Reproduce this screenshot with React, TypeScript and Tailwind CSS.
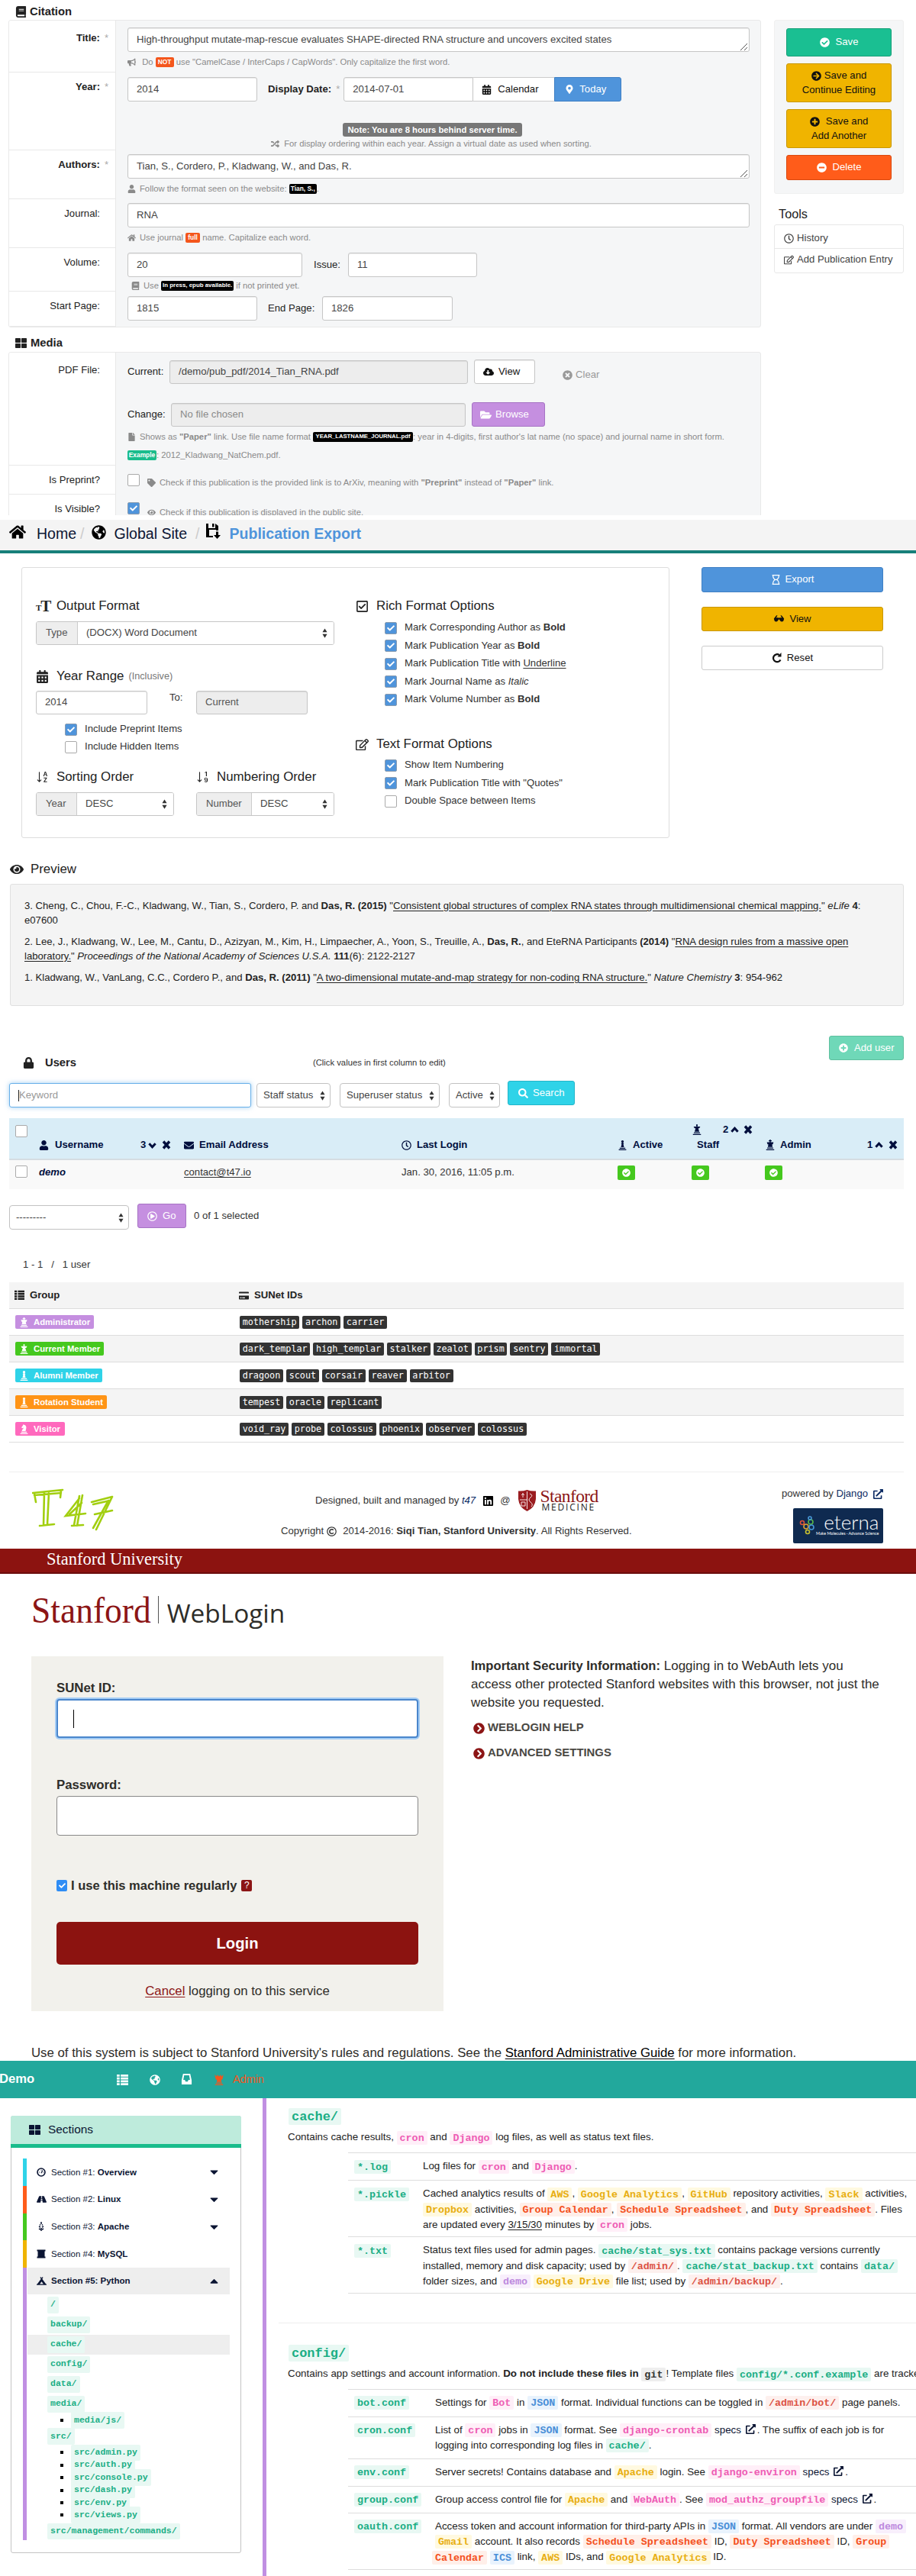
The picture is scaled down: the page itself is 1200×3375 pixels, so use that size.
import type { ReactNode } from "react";
import type { IconType } from "react-icons";
import { BsSortAlphaDown, BsSortNumericDown } from "react-icons/bs";
import {
  FaArrowCircleRight, FaBook, FaBullhorn, FaCalendarAlt, FaCampground, FaCaretDown, FaCaretUp, FaCheck, FaCheckCircle,
  FaChevronCircleRight, FaCloudDownloadAlt, FaCreditCard, FaEnvelope, FaExternalLinkAlt, FaEye, FaFile, FaFolderOpen,
  FaGlobeAmericas, FaHome, FaLinkedin, FaLock, FaMapMarkerAlt, FaMinusCircle, FaPlusCircle, FaRandom,
  FaRegCheckSquare, FaRegClock, FaRegCopyright, FaRegEdit, FaRegHourglass, FaRegPlayCircle, FaRoad, FaSearch,
  FaTag, FaThLarge, FaTimesCircle, FaUser,
} from "react-icons/fa";

type Kids = { children?: ReactNode; className?: string };
type IconProps = { className?: string };

/* ---------- small icons ---------- */

const GRAY_BASE = "M2 14.500h12V16H2zM3.500 12h9v1.500h-9z";

function King({ className = "" }: IconProps) {
  return <svg viewBox="0 0 16 16" className={`fill-current ${className}`}><path d={`${GRAY_BASE}M7.200 0h1.600v1.200h1.400v1.500H8.800V4H13l-1 3h-1.200l.7 4h-7l.7-4H4L3 4h4.200V2.700H5.800V1.200h1.400z`} /></svg>;
}
function Queen({ className = "" }: IconProps) {
  return <svg viewBox="0 0 16 16" className={`fill-current ${className}`}><path d={`${GRAY_BASE}M8 0a1.300 1.300 0 0 1 .8 2.300V3.500H13L11.500 6H10l1.500 5h-7L6 6H4.500L3 3.500h4.200V2.300A1.300 1.300 0 0 1 8 0z`} /></svg>;
}
function Rook({ className = "" }: IconProps) {
  return <svg viewBox="0 0 16 16" className={`fill-current ${className}`}><path d={`${GRAY_BASE}M1.500 0l3 3L5.500 0 8 3l2.500-3 1 3 3-3-1.500 7-2 1 .5 3h-7L5 8 3 7z`} /></svg>;
}
function Bishop({ className = "" }: IconProps) {
  return <svg viewBox="0 0 16 16" className={`fill-current ${className}`}><path d={`${GRAY_BASE}M8 0a2.100 2.100 0 0 1 1.200 3.800V5H10v1.300H9.300L10.500 11h-5l1.200-4.700H6V5h.8V3.800A2.100 2.100 0 0 1 8 0z`} /></svg>;
}
function Knight({ className = "" }: IconProps) {
  return <svg viewBox="0 0 16 16" className={`fill-current ${className}`}><path d={`${GRAY_BASE}M7 0l1 1c3 .5 4 3 3.500 5.500L10.500 11h-6c0-2.500 2.500-3.500 3-5.500L5 6.500 3.800 5.200 6 2z`} /></svg>;
}
function Cross({ className = "" }: IconProps) {
  return <svg viewBox="0 0 12 12" className={`fill-none stroke-current stroke-[3.4] ${className}`}><path d="M2 1.500 10 10.500M10 1.500 2 10.500" /></svg>;
}
function Down({ className = "" }: IconProps) {
  return <svg viewBox="0 0 12 12" className={`fill-none stroke-current stroke-[3.2] ${className}`}><path d="M1.500 3.500 6 8.500l4.500-5" /></svg>;
}
function Up({ className = "" }: IconProps) {
  return <svg viewBox="0 0 12 12" className={`fill-none stroke-current stroke-[3.2] ${className}`}><path d="M1.500 8.500 6 3.500l4.500 5" /></svg>;
}
function Floppy({ className = "" }: IconProps) {
  return <svg viewBox="0 0 20 20" className={`fill-current ${className}`}><path d="M1 0h3v6h9V0l4 3v6h-3V8H5v8h5v2H1zM9 0h2.500v4.500H9zM14 10.500h3V15h3l-4.500 5-4.500-5h3z" /></svg>;
}
function ListIcon({ className = "" }: IconProps) {
  return <svg viewBox="0 0 16 16" className={`fill-current ${className}`}><path d="M0 1h4v3H0zM5.500 1H16v3H5.500zM0 5h4v3H0zM5.500 5H16v3H5.500zM0 9h4v3H0zM5.500 9H16v3H5.500zM0 13h4v3H0zM5.500 13H16v3H5.500z" /></svg>;
}
function Tray({ className = "" }: IconProps) {
  return <svg viewBox="0 0 16 16" className={`fill-current ${className}`}><path fillRule="evenodd" d="M3 0h10l2 9v6H1V9zM4.500 2 3.300 8.500H5.500L6.500 11h3l1-2.500h2.200L11.500 2z" /></svg>;
}
function Shades({ className = "" }: IconProps) {
  return <svg viewBox="0 0 16 12" className={`fill-current ${className}`}><path d="M3.500 1 5 0l.5 1L3.500 4H7l1 .6L9 4h3.500l-2-3 .5-1 1.500 1L16 5.500 15 9q-2.500 2.500-5 0L8.500 6.500h-1L6 9q-2.500 2.500-5 0L0 5.500z" /></svg>;
}
function Repeat({ className = "" }: IconProps) {
  return <svg viewBox="0 0 14 14" className={`fill-none stroke-current stroke-[2.2] ${className}`}><path d="M11.500 9.500A5 5 0 1 1 9.800 3" /><path d="M12.500 0v5.500H7.500z" className="fill-current" stroke="none" /></svg>;
}
function TextSize({ className = "" }: IconProps) {
  return (
    <span className={`flex items-end font-['Liberation_Serif',serif] font-bold ${className}`}>
      <span className="text-[11px] leading-[12px]">T</span>
      <span className="-ml-px text-[21px] leading-[16px]">T</span>
    </span>
  );
}
function Gauge({ className = "" }: IconProps) {
  return <svg viewBox="0 0 14 14" className={`fill-none stroke-current ${className}`}><circle cx="7" cy="7" r="5.800" strokeWidth="1.900" /><path d="M7 8.500 9 4M3.800 7h1M9.500 7h1M7 3.200v1" strokeWidth="1.300" /></svg>;
}
function Grain() {
  return <svg viewBox="0 0 12 12" className="size-[12px] fill-none stroke-current stroke-[1.500]"><path d="M6 0v3M4 3.500l1 1M8 3.500l-1 1M3 6l2 1M9 6 7 7M3 9l2 1M9 9l-2 1M6 8v4" /></svg>;
}
function Scroll() {
  return <svg viewBox="0 0 12 12" className="size-[12px] fill-current"><path d="M.500.500h11v2h-1v7h1v2H.500v-2h1v-7h-1z" /></svg>;
}

/* ---------- shared pieces ---------- */

function Field({ children, muted, className = "" }: Kids & { muted?: boolean }) {
  return (
    <div className={`flex shrink-0 items-center rounded-[3px] border border-[#c6c6c6] pl-[11px] shadow-[inset_0_1px_1px_rgba(0,0,0,0.08)] ${muted ? "bg-[#ededed]" : "bg-white"} ${className}`}>
      {children}
    </div>
  );
}

function Updown() {
  return (
    <svg viewBox="0 0 8 16" className="h-[15px] w-[7px] shrink-0 fill-[#333]">
      <path d="M4 1 7.500 6.500H.500zM4 15 .500 9.500h7z" />
    </svg>
  );
}

function Grip() {
  return <svg viewBox="0 0 9 9" className="mt-[18px] mr-0.5 size-[9px] stroke-[#555]"><path d="M0 9 9 0M5 9l4-4" /></svg>;
}

function Check({ on = false, className = "" }: { on?: boolean; className?: string }) {
  return on ? (
    <span className={`flex size-4 shrink-0 items-center justify-center rounded-[2px] border border-[#8a9cb0] bg-[#4f94db] text-white ${className}`}>
      <FaCheck size={10} />
    </span>
  ) : (
    <span className={`size-4 shrink-0 rounded-[2px] border border-[#aaa] bg-white ${className}`} />
  );
}

function Tiny({ children, className = "text-[8.400px]" }: Kids) {
  return <b className={`inline-flex h-[13px] shrink-0 items-center justify-center rounded-[2px] leading-none text-white ${className}`}>{children}</b>;
}

/* ---------- publication form ---------- */

function FormRow({ label, star, bold, first, className = "", children }: Kids & { label: string; star?: boolean; bold?: boolean; first?: boolean }) {
  return (
    <div className={`flex shrink-0 ${className}`}>
      <div className={`relative w-[140px] shrink-0 border-r border-b border-[#e8e8e8] bg-white pr-5 text-right leading-5 ${first ? "pt-[13px]" : "pt-[9px]"} ${bold ? "font-bold" : ""}`}>
        {label}
        {star && <span className="absolute right-[9px] font-normal text-[#aaa]">*</span>}
      </div>
      <div className="flex-1 pl-[15px]">{children}</div>
    </div>
  );
}

function Help({ icon: Icon, className = "", children }: Kids & { icon: IconType }) {
  return (
    <div className={`flex items-center whitespace-pre text-[11.26px] leading-4 text-[#8a8a8a] ${className}`}>
      <Icon className="mr-[5px] size-[11px] shrink-0" />
      {children}
    </div>
  );
}

function PublicationForm() {
  return (
    <section className="h-[681px] text-[13.13px] text-[#222]">
      <div className="flex h-[675px] overflow-hidden pl-[11px]">
        <div className="w-[986px]">
          <h2 className="flex h-[26px] items-center pt-[5px] pl-[9px] text-[14.78px] font-bold">
            <FaBook className="mr-1 size-[15px]" />Citation
          </h2>
          <div className="overflow-hidden rounded-[3px] border border-[#e9e9e9] bg-[#f5f6f7]">
            <FormRow label="Title:" star bold first className="h-[68px]">
              <Field className="mt-[9px] h-8 w-[815px] justify-between text-[#444]">
                High-throughput mutate-map-rescue evaluates SHAPE-directed RNA structure and uncovers excited states
                <Grip />
              </Field>
              <Help icon={FaBullhorn} className="mt-[5px]">
                {" Do "}<Tiny className="w-6 bg-[#f4561c] text-[8.400px]">NOT</Tiny>{" use \"CamelCase / InterCaps / CapWords\". Only capitalize the first word."}
              </Help>
            </FormRow>
            <FormRow label="Year:" star bold className="h-[102px]">
              <div className="flex items-center pt-[6px]">
                <Field className="h-8 w-[170px] text-[#444]">2014</Field>
                <b className="ml-[14px]">Display Date:</b>
                <span className="mr-[5px] ml-[6px] text-[#aaa]">*</span>
                <Field className="h-8 w-[170px] rounded-r-none text-[#444]">2014-07-01</Field>
                <div className="flex h-8 w-[106px] items-center border-y border-[#ccc] bg-white pl-[11px] text-[#111]"><FaCalendarAlt className="mr-2 size-[13px]" />Calendar</div>
                <div className="flex h-8 w-[88px] items-center rounded-r-[3px] border border-[#3e7fc4] bg-[#4f94db] pl-[13px] text-white"><FaMapMarkerAlt className="mr-[7px] size-[12px]" />Today</div>
              </div>
              <div className="mt-7 ml-[282px] flex h-[18px] w-[235px] items-center justify-center rounded-[3px] bg-[#777] text-[11.26px] font-bold text-white">Note: You are 8 hours behind server time.</div>
              <Help icon={FaRandom} className="mt-px ml-[188px]"><span className="-ml-0.5">{" For display ordering within each year. Assign a virtual date as used when sorting."}</span></Help>
            </FormRow>
            <FormRow label="Authors:" star bold className="h-[64px]">
              <Field className="mt-[5px] h-8 w-[815px] justify-between text-[#444]">
                Tian, S., Cordero, P., Kladwang, W., and Das, R.
                <Grip />
              </Field>
              <Help icon={FaUser} className="mt-[5px]">{"Follow the format seen on the website: "}<Tiny className="w-9 bg-black text-[8.400px]">Tian, S.,</Tiny>.</Help>
            </FormRow>
            <FormRow label="Journal:" className="h-[64px]">
              <Field className="mt-[5px] h-8 w-[815px] text-[#444]">RNA</Field>
              <Help icon={FaHome} className="mt-[5px]">{"Use journal "}<Tiny className="w-[19px] bg-[#f4561c] text-[8.400px]">full</Tiny>{" name. Capitalize each word."}</Help>
            </FormRow>
            <FormRow label="Volume:" className="h-[57px]">
              <div className="flex items-center pt-[6px]">
                <Field className="h-8 w-[229px] text-[#444]">20</Field>
                <span className="ml-[15px] w-[45px]">Issue:</span>
                <Field className="h-8 w-[169px] text-[#444]">11</Field>
              </div>
              <Help icon={FaBook} className="mt-[3px] ml-[5px]">{"Use "}<Tiny className="w-[95px] bg-black text-[7.900px]">In press, epub available.</Tiny>{" if not printed yet."}</Help>
            </FormRow>
            <FormRow label="Start Page:" className="h-[46px]">
              <div className="flex items-center pt-[6px]">
                <Field className="h-8 w-[170px] text-[#444]">1815</Field>
                <span className="ml-[14px] w-[71px]">End Page:</span>
                <Field className="h-8 w-[171px] text-[#444]">1826</Field>
              </div>
            </FormRow>
          </div>
          <h2 className="flex h-8 items-center pt-2 pl-[9px] text-[14.78px] font-bold">
            <FaThLarge className="mr-[5px] size-[15px]" />Media
          </h2>
          <div className="overflow-hidden rounded-t-[3px] border border-[#e9e9e9] bg-[#f5f6f7]">
            <FormRow label="PDF File:" first className="h-[148px]">
              <div className="flex pt-[9px]">
                <span className="w-[55px] pt-[6px] leading-5">Current:</span>
                <Field muted className="mt-px h-[31px] w-[391px] text-[#444]">/demo/pub_pdf/2014_Tian_RNA.pdf</Field>
                <Field className="ml-2 h-8 w-20 text-[#111]"><FaCloudDownloadAlt className="mr-[6px] size-[14px]" />View</Field>
                <span className="ml-9 flex items-center pt-2 text-[#999]"><FaTimesCircle className="mr-1 size-[13px]" />Clear</span>
              </div>
              <div className="mt-[24px] flex">
                <span className="w-[57px] pt-[6px] leading-5">Change:</span>
                <Field muted className="mt-px h-[31px] w-[386px] text-[#8a8a8a]">No file chosen</Field>
                <div className="ml-2 flex h-8 w-24 items-center rounded-[3px] border border-[#a673c4] bg-[#c58fe0] pl-[10px] text-white"><FaFolderOpen className="mr-[5px] size-[15px]" />Browse</div>
              </div>
              <Help icon={FaFile} className="mt-[5px]">
                {"Shows as "}<b>"Paper"</b>{" link. Use file name format "}<Tiny className="w-[131px] bg-black text-[7.700px]">YEAR_LASTNAME_JOURNAL.pdf</Tiny>{": year in 4-digits, first author's lat name (no space) and journal name in short form."}
              </Help>
              <div className="mt-2 flex items-center text-[11.26px] leading-4 whitespace-pre text-[#8a8a8a]">
                <Tiny className="w-[38px] bg-[#1abc8c] text-[8.400px]">Example</Tiny>{": 2012_Kladwang_NatChem.pdf."}
              </div>
            </FormRow>
            <FormRow label="Is Preprint?" className="h-[38px]">
              <div className="flex pt-[11px]">
                <Check className="mr-[10px]" />
                <Help icon={FaTag} className="pt-[3px]">{"Check if this publication is the provided link is to ArXiv, meaning with "}<b>"Preprint"</b>{" instead of "}<b>"Paper"</b>{" link."}</Help>
              </div>
            </FormRow>
            <FormRow label="Is Visible?" className="h-[38px]">
              <div className="flex pt-[10px]">
                <Check on className="mr-[10px]" />
                <Help icon={FaEye} className="pt-[5px]">Check if this publication is displayed in the public site.</Help>
              </div>
            </FormRow>
          </div>
        </div>
        <aside className="ml-[17px] w-[170px] pt-[26px]">
          <div className="flex h-[228px] flex-col gap-[9px] rounded-[3px] border border-[#f0f0f0] bg-[#f5f6f7] px-[15px] pt-[10px] leading-[18.700px]">
            <div className="flex h-[37px] items-center justify-center rounded-[3px] border border-[#17a078] bg-[#1abf92] text-white"><FaCheckCircle className="mr-2 size-[13px]" />Save</div>
            <div className="flex h-[51px] flex-col items-center justify-center rounded-[3px] border border-[#c99700] bg-[#f0b400] text-[#111]"><span className="flex items-center"><FaArrowCircleRight className="mr-1 size-[13px]" />Save and</span>Continue Editing</div>
            <div className="flex h-[51px] flex-col items-center justify-center rounded-[3px] border border-[#c99700] bg-[#f0b400] text-[#111]"><span className="flex items-center"><FaPlusCircle className="mr-2 size-[13px]" />Save and</span>Add Another</div>
            <div className="flex h-[33px] items-center justify-center rounded-[3px] border border-[#d9490f] bg-[#ff5c1a] text-white"><FaMinusCircle className="mr-2 size-[13px]" />Delete</div>
          </div>
          <div className="mt-4 pl-[6px] text-[16.3px] leading-5">Tools</div>
          <div className="mt-1 rounded-[3px] border border-[#e8e8e8] text-[#444]">
            <div className="flex h-[31px] items-center border-b border-[#e8e8e8] pt-1 pl-3"><FaRegClock className="mr-1 size-[13px]" />History</div>
            <div className="flex h-[31px] items-center pb-0.5 pl-3 whitespace-nowrap"><FaRegEdit className="mr-1 size-[13px] shrink-0" />Add Publication Entry</div>
          </div>
        </aside>
      </div>
    </section>
  );
}

/* ---------- export page ---------- */

function Heading({ icon, children, className = "" }: Kids & { icon: ReactNode }) {
  return (
    <h3 className={`flex h-6 items-center text-[16.88px] text-[#222] ${className}`}>
      <span className="w-[27px] shrink-0">{icon}</span>
      {children}
    </h3>
  );
}

function Group({ addon, value, className = "", addonClass }: { addon: string; value: string; className?: string; addonClass: string }) {
  return (
    <div className={`flex h-[31px] overflow-hidden rounded-[3px] border border-[#c6c6c6] text-[#555] ${className}`}>
      <span className={`flex items-center border-r border-[#ccc] bg-[#eee] pl-3 ${addonClass}`}>{addon}</span>
      <span className="flex flex-1 items-center justify-between bg-white pr-2 pl-[11px] text-[#444]">{value}<Updown /></span>
    </div>
  );
}

function Option({ on, children, className = "" }: Kids & { on?: boolean }) {
  return <div className={`flex items-center whitespace-pre text-[#333] ${className}`}><Check on={on} className="mr-[10px]" />{children}</div>;
}

function ExportPage() {
  return (
    <section className="h-[637px] text-[13.13px]">
      <div className="flex h-[44px] items-center border-b-4 border-[#17807a] bg-[#f4f4f4] pb-1 text-[19.55px] text-[#0b1533]">
        <FaHome className="mb-1 ml-[12px] size-[22px] text-black" /><span className="ml-[14px]">Home</span>
        <span className="ml-[5px] text-[#ccc]">/</span>
        <FaGlobeAmericas className="mb-1 ml-[9px] size-[19px] text-black" /><span className="ml-[11px]">Global Site</span>
        <span className="ml-[11px] text-[#ccc]">/</span>
        <Floppy className="mb-1.5 ml-[7px] size-[20px] text-black" /><b className="ml-[12px] text-[#4f94db]">Publication Export</b>
      </div>
      <div className="flex pt-[18px] pl-[28px]">
        <div className="flex h-[355px] w-[849px] rounded-[3px] border border-[#ddd] pt-[38px] pl-[18px]">
          <div className="w-[391px]">
            <Heading icon={<TextSize />}>Output Format</Heading>
            <Group addon="Type" value="(DOCX) Word Document" addonClass="w-[54px]" className="mt-2" />
            <Heading icon={<FaCalendarAlt className="size-[17px]" />} className="mt-[29px]">Year Range <span className="ml-[6px] text-[12.700px] text-[#777]">(Inclusive)</span></Heading>
            <div className="mt-[7px] flex">
              <Field className="h-[31px] w-[146px] text-[#444]">2014</Field>
              <span className="ml-[29px] w-[35px] text-[#333]">To:</span>
              <Field muted className="h-[31px] w-[146px] text-[#555]">Current</Field>
            </div>
            <div className="mt-2 pl-[38px]">
              <Option on className="h-[23px]">Include Preprint Items</Option>
              <Option className="h-[23px]">Include Hidden Items</Option>
            </div>
            <div className="mt-4 flex justify-between">
              <div className="w-[181px]">
                <Heading icon={<BsSortAlphaDown className="size-[18px]" />}>Sorting Order</Heading>
                <Group addon="Year" value="DESC" addonClass="w-[53px]" className="mt-2" />
              </div>
              <div className="w-[181px]">
                <Heading icon={<BsSortNumericDown className="size-[18px]" />}>Numbering Order</Heading>
                <Group addon="Number" value="DESC" addonClass="w-[72px]" className="mt-2" />
              </div>
            </div>
          </div>
          <div className="ml-[28px]">
            <Heading icon={<FaRegCheckSquare className="size-[17px]" />}>Rich Format Options</Heading>
            <div className="mt-[5px] pl-[38px]">
              <Option on className="h-[23.500px]">{"Mark Corresponding Author as "}<b>Bold</b></Option>
              <Option on className="h-[23.500px]">{"Mark Publication Year as "}<b>Bold</b></Option>
              <Option on className="h-[23.500px]">{"Mark Publication Title with "}<u className="underline-offset-2">Underline</u></Option>
              <Option on className="h-[23.500px]">{"Mark Journal Name as "}<i>Italic</i></Option>
              <Option on className="h-[23.500px]">{"Mark Volume Number as "}<b>Bold</b></Option>
            </div>
            <Heading icon={<FaRegEdit className="size-[17px]" />} className="mt-[34.500px]">Text Format Options</Heading>
            <div className="mt-1 pl-[38px]">
              <Option on className="h-[23.500px]">Show Item Numbering</Option>
              <Option on className="h-[23.500px]">Mark Publication Title with "Quotes"</Option>
              <Option className="h-[23.500px]">Double Space between Items</Option>
            </div>
          </div>
        </div>
        <div className="ml-[42px] flex w-[238px] flex-col gap-[19px]">
          <div className="flex h-[33px] items-center justify-center rounded-[3px] border border-[#3e7fc4] bg-[#4f94db] text-white"><FaRegHourglass className="mr-[6px] size-[13px]" />Export</div>
          <div className="flex h-8 items-center justify-center rounded-[3px] border border-[#c99700] bg-[#f0b400] text-[#111]"><Shades className="mr-[6px] h-[10px] w-[15px]" />View</div>
          <div className="flex h-8 items-center justify-center rounded-[3px] border border-[#ccc] bg-white text-[#111]"><Repeat className="mr-[6px] size-[14px]" />Reset</div>
        </div>
      </div>
      <Heading icon={<FaEye className="size-[18px]" />} className="mt-[29px] ml-[13px]">Preview</Heading>
      <div className="mt-[7px] ml-[13px] h-40 w-[1171px] rounded-[3px] border border-[#e0e0e0] bg-[#f4f4f4] pt-[19px] pl-[18px] leading-[18.76px] whitespace-nowrap text-[#222]">
        <p>3. Cheng, C., Chou, F.-C., Kladwang, W., Tian, S., Cordero, P. and <b>Das, R. (2015)</b> "<u className="underline-offset-2">Consistent global structures of complex RNA states through multidimensional chemical mapping.</u>" <i>eLife</i> <b>4</b>:<br />e07600</p>
        <p className="mt-[9.400px]">2. Lee, J., Kladwang, W., Lee, M., Cantu, D., Azizyan, M., Kim, H., Limpaecher, A., Yoon, S., Treuille, A., <b>Das, R.</b>, and EteRNA Participants <b>(2014)</b> "<u className="underline-offset-2">RNA design rules from a massive open</u><br /><u className="underline-offset-2">laboratory.</u>" <i>Proceedings of the National Academy of Sciences U.S.A.</i> <b>111</b>(6): 2122-2127</p>
        <p className="mt-[9.400px]">1. Kladwang, W., VanLang, C.C., Cordero P., and <b>Das, R. (2011)</b> "<u className="underline-offset-2">A two-dimensional mutate-and-map strategy for non-coding RNA structure.</u>" <i>Nature Chemistry</i> <b>3</b>: 954-962</p>
      </div>
    </section>
  );
}

/* ---------- users page ---------- */

function Select({ children, className = "" }: Kids) {
  return <div className={`flex h-8 shrink-0 items-center justify-between rounded-[4px] border border-[#c2c2c2] bg-white pr-[6px] pl-2 text-[#444] ${className}`}>{children}<Updown /></div>;
}

function Ok() {
  return <span className="flex h-[19px] w-[23px] items-center justify-center rounded-[2px] bg-[#45c81e] text-white"><FaCheckCircle size={11} /></span>;
}

const groups: { name: string; icon: (p: IconProps) => ReactNode; tag: string; ids: string[] }[] = [
  { name: "Administrator", icon: King, tag: "w-[103px] bg-[#c58fe0]", ids: ["mothership", "archon", "carrier"] },
  { name: "Current Member", icon: Queen, tag: "w-[116px] bg-[#45c81e]", ids: ["dark_templar", "high_templar", "stalker", "zealot", "prism", "sentry", "immortal"] },
  { name: "Alumni Member", icon: Bishop, tag: "w-[114px] bg-[#2fd3e8]", ids: ["dragoon", "scout", "corsair", "reaver", "arbitor"] },
  { name: "Rotation Student", icon: Bishop, tag: "w-[120px] bg-[#ff9416]", ids: ["tempest", "oracle", "replicant"] },
  { name: "Visitor", icon: Knight, tag: "w-[65px] bg-[#ff69bd]", ids: ["void_ray", "probe", "colossus", "phoenix", "observer", "colossus"] },
];

function UsersPage() {
  return (
    <section className="h-[711px] pt-[39px] pr-4 pl-3 text-[13.13px] text-[#333]">
      <div className="flex h-[59px]">
        <div className="flex w-[398px] items-center pt-[11px] pl-[18px] text-[14.75px] font-bold text-[#222]"><FaLock className="mr-[14px] size-[15px]" />Users</div>
        <div className="flex w-[676px] items-center pt-[11px] text-[11.26px]">(Click values in first column to edit)</div>
        <div className="flex h-8 w-[98px] shrink-0 items-center rounded-[3px] border border-[#5fbf9f] bg-[#6fd8b8] pl-3 whitespace-nowrap text-white"><FaPlusCircle className="mr-2 size-[12px]" />Add user</div>
      </div>
      <div className="flex h-[49px]">
        <div className="mt-[3px] flex h-8 w-[317px] items-center rounded-[3px] border border-[#66afe9] bg-white pl-[11px] text-[#999] shadow-[0_0_6px_rgba(102,175,233,0.6)]"><span className="h-[15px] w-px bg-[#222]" />Keyword</div>
        <Select className="mt-[3px] ml-[7px] w-[97px]">Staff status</Select>
        <Select className="mt-[3px] ml-[12px] w-[131px]">Superuser status</Select>
        <Select className="mt-[3px] ml-[12px] w-[67px]">Active</Select>
        <div className="ml-[10px] flex h-8 w-[88px] items-center rounded-[3px] border border-[#22b5c9] bg-[#2fd3e8] pl-[13px] text-white"><FaSearch className="mr-[6px] size-[13px]" />Search</div>
      </div>
      <div className="flex h-[55px] border-b-2 border-[#d5dde2] bg-[#d9edf7] leading-5 font-bold text-[#000e3d]">
        <div className="w-[39px] pt-[9px] pl-2"><Check className="block" /></div>
        <div className="flex w-[190px] items-center pt-[17px]"><FaUser className="mr-2 size-[13px]" /><span className="w-[112px]">Username</span>3<Down className="mx-[3px] size-[11px]" /><Cross className="ml-1 size-[12px]" /></div>
        <div className="flex w-[285px] items-center pt-[17px]"><FaEnvelope className="mr-[7px] size-[13px]" />Email Address</div>
        <div className="flex w-[283px] items-center pt-[17px]"><FaRegClock className="mr-[7px] size-[13px]" />Last Login</div>
        <div className="flex w-[97px] items-center pt-[17px]"><Bishop className="mr-[7px] size-[13px]" />Active</div>
        <div className="w-[96px] pt-[5px]">
          <div className="flex items-center"><Queen className="mr-[27px] size-[14px]" />2<Up className="mx-[3px] size-[11px]" /><Cross className="ml-[3px] size-[12px]" /></div>
          <div className="pl-[7px] leading-[19px]">Staff</div>
        </div>
        <div className="flex w-[178px] items-center pt-[17px]"><King className="mr-[6px] size-[14px]" /><span className="w-[114px]">Admin</span>1<Up className="mx-[3px] size-[11px]" /><Cross className="ml-1 size-[12px]" /></div>
      </div>
      <div className="flex h-[38px] items-start bg-[#f9f9f9] pt-[7px]">
        <div className="w-[39px] pl-2"><Check className="block" /></div>
        <b className="w-[190px] text-[#000e3d] italic">demo</b>
        <div className="w-[285px]"><u className="underline-offset-2">contact@t47.io</u></div>
        <div className="w-[283px]">Jan. 30, 2016, 11:05 p.m.</div>
        <div className="w-[97px]"><Ok /></div>
        <div className="w-[96px]"><Ok /></div>
        <Ok />
      </div>
      <div className="mt-[19px] flex h-[33px]">
        <Select className="mt-[2px] w-[157px]">---------</Select>
        <div className="ml-[11px] flex h-8 w-16 items-center rounded-[3px] border border-[#a673c4] bg-[#c58fe0] pl-3 text-white"><FaRegPlayCircle className="mr-[7px] size-[13px]" />Go</div>
        <span className="ml-[10px] leading-[32px]">0 of 1 selected</span>
      </div>
      <div className="mt-[37px] pl-[18px] leading-5 whitespace-pre">{"1 - 1   /   1 user"}</div>
      <div className="mt-[13px] flex h-[35px] items-center border-b border-[#ddd] bg-[#f4f4f4] pl-[7px] font-bold text-[#222]">
        <span className="flex w-[294px] items-center"><ListIcon className="mr-[7px] size-[13px]" />Group</span>
        <FaCreditCard className="mr-[7px] size-[13px]" />SUNet IDs
      </div>
      {groups.map((g, i) => (
        <div key={g.name} className={`flex h-[35px] items-center border-b border-[#ddd] pl-2 ${i % 2 ? "bg-[#f4f4f4]" : "bg-white"}`}>
          <div className="w-[294px]"><b className={`flex h-[18px] items-center rounded-[2px] pl-[5px] text-[11.3px] whitespace-nowrap text-white ${g.tag}`}><g.icon className="mr-[6px] size-[13px]" />{g.name}</b></div>
          <div className="flex gap-1">
            {g.ids.map((id, k) => (
              <span key={k} className="h-[17px] rounded-[2px] bg-[#333] px-[3.700px] font-['DejaVu_Sans_Mono',monospace] text-[11.77px] leading-[16px] text-white">{id}</span>
            ))}
          </div>
        </div>
      ))}
      <div className="mt-[38px] flex h-[101px] border-t border-[#eee]">
        <svg viewBox="0 0 107 56" className="mt-[21px] ml-[30px] h-14 w-[107px] shrink-0 fill-none stroke-[#a2cf10] stroke-[2.6]" strokeLinecap="round">
          <path d="M1 6 40 2M3 9 38 6M3 7l2 11M38 3l-1 9M16 6l-1 42M22 6l-2 41M10 49l19-2M62 13 44 36l26-3M65 19 49 34M66 9l-7 40M62 10l-7 38M52 49l15-1M78 18l27-7M80 21l22-5M105 11 84 54M100 16 80 52M82 34l23-5" />
        </svg>
        <div className="ml-[219px] w-[470px] shrink-0 pt-[18px]">
          <div className="flex h-[38px] items-center pl-[45px] whitespace-pre">
            {"Designed, built and managed by "}<i className="text-[#0b2a63]">t47</i>
            <FaLinkedin className="mr-2 ml-[9px] size-[15px] text-black" />@
            <svg viewBox="0 0 23 28" className="ml-[11px] h-7 w-[23px]">
              <path d="M0 1.500Q6 2 11.500 0 17 2 23 1.500V12Q22 23 11.500 28 1 23 0 12Z" fill="#9a1c20" />
              <path d="M11.500 2v23M2 13h9M6 4v6m-2-3 2-2 2 2M4 16h5v5H4zM15 5q5 2 1 5t0 6 1 6" fill="none" stroke="#f4e4e4" strokeWidth="1" />
            </svg>
            <div className="ml-[5px] flex flex-col">
              <span className="-mb-0.5 font-['Liberation_Serif',serif] text-[23.5px] leading-[20px] tracking-tight text-[#8c1515]">Stanford</span>
              <span className="pl-0.5 font-['Open_Sans',sans-serif] text-[12px] leading-[14px] tracking-[1.800px] text-[#222]">MEDICINE</span>
            </div>
          </div>
          <div className="mt-[11px] flex items-center leading-5 whitespace-pre">
            Copyright<FaRegCopyright className="mr-2 ml-1 size-[13px]" />2014-2016: <b>Siqi Tian, Stanford University</b>. All Rights Reserved.
          </div>
        </div>
        <div className="ml-[184px] flex w-[135px] shrink-0 flex-col items-end pt-[18px]">
          <div className="flex items-center leading-5 whitespace-pre">powered by <span className="text-[#0b2a63]">Django</span><FaExternalLinkAlt className="ml-[7px] size-[13px] text-[#0b2a63]" /></div>
          <div className="mt-[9px] flex h-[46px] w-[118px] items-center rounded-[2px] bg-[#0f2a50] pl-2 text-white">
            <svg viewBox="0 0 22 26" className="h-[26px] w-[22px] shrink-0 fill-none stroke-[1.6]">
              <circle cx="4" cy="9" r="2.500" stroke="#e05038" /><circle cx="9" cy="14" r="3" stroke="#e0a030" /><circle cx="15" cy="8" r="3" stroke="#58b848" /><circle cx="16" cy="15" r="3" stroke="#4898d8" /><circle cx="11" cy="21" r="2.500" stroke="#c8c030" /><circle cx="14" cy="3" r="2" stroke="#4898d8" />
            </svg>
            <div className="flex flex-col items-end">
              <span className="-mt-1 font-['Lato',sans-serif] text-[26px] leading-[24px] font-light">eterna</span>
              <span className="font-['Lato',sans-serif] text-[5.400px] leading-[7px] whitespace-nowrap">Make Molecules · Advance Science</span>
            </div>
          </div>
        </div>
      </div>
    </section>
  );
}

/* ---------- login page ---------- */

function LoginPage() {
  return (
    <section className="h-[671px] text-[16.800px] text-[#2e2d29]">
      <div className="h-[33px] border-b-2 border-[#6b0d0d] bg-[#8c1310] pl-[61px] font-['Liberation_Serif',serif] text-[22.5px] leading-[27px] text-white">Stanford University</div>
      <div className="flex h-[108px] pt-[26px] pl-[41px]">
        <span className="h-[38px] origin-bottom scale-y-[1.07] font-['Liberation_Serif',serif] text-[45.5px] leading-[46px] text-[#8c1515]">Stanford</span>
        <span className="mt-[3px] ml-[9px] h-9 w-px bg-[#555]" />
        <span className="ml-[11px] font-['Open_Sans',sans-serif] text-[33.4px] leading-[51px]">WebLogin</span>
      </div>
      <div className="flex pl-[41px]">
        <div className="h-[465px] w-[540px] bg-[#f2f1ec] px-[33px] pt-[30px]">
          <b className="block leading-6">SUNet ID:</b>
          <div className="mt-0.5 flex h-[51px] items-center rounded-[4px] border-2 border-[#4a86cc] bg-white pl-5 shadow-[0_0_0_2px_#a5cdf5]"><span className="h-6 w-px bg-black" /></div>
          <b className="mt-[50px] block leading-6">Password:</b>
          <div className="mt-[2px] h-[52px] rounded-[4px] border border-[#888] bg-white" />
          <div className="mt-[53px] flex h-6 items-center">
            <span className="flex h-[15px] w-[14px] items-center justify-center rounded-[2px] bg-[#2f8df5] text-white"><FaCheck size={9} /></span>
            <b className="ml-[5px] text-[16.5px]">I use this machine regularly</b>
            <span className="ml-[6px] flex h-[15px] w-[14px] items-center justify-center rounded-[2px] bg-[#8c1515] text-[12px] text-white">?</span>
          </div>
          <div className="mt-[36px] flex h-[56px] items-center justify-center rounded-[5px] bg-[#8c1310] text-[20.200px] font-bold text-white">Login</div>
          <div className="mt-[23px] text-center leading-6"><u className="text-[#8c1515] underline-offset-2">Cancel</u> logging on to this service</div>
        </div>
        <div className="ml-[36px] text-[17px] leading-[23.800px] whitespace-nowrap">
          <p className="pt-px"><b className="text-[16.600px]">Important Security Information:</b> Logging in to WebAuth lets you<br />access other protected Stanford websites with this browser, not just the<br />website you requested.</p>
          <p className="mt-[10px] flex items-center pl-[3px] text-[14.900px] font-bold text-[#4a4843]"><FaChevronCircleRight className="mr-1 size-[15px] text-[#8c1515]" />WEBLOGIN HELP</p>
          <p className="mt-[9px] flex items-center pl-[3px] text-[14.900px] font-bold text-[#4a4843]"><FaChevronCircleRight className="mr-1 size-[15px] text-[#8c1515]" />ADVANCED SETTINGS</p>
        </div>
      </div>
      <p className="mt-[43px] pl-[41px] leading-6 whitespace-nowrap">Use of this system is subject to Stanford University's rules and regulations. See the <u className="text-black underline-offset-2">Stanford Administrative Guide</u> for more information.</p>
    </section>
  );
}

/* ---------- documentation page ---------- */

const tones = {
  green: "bg-[#e8f8f3] text-[#1aae85]",
  pink: "bg-[#ffeff8] text-[#ee5cb4]",
  gold: "bg-[#fff9e0] text-[#e8ae10]",
  orange: "bg-[#ffefe9] text-[#f4511e]",
  red: "bg-[#fdf0ee] text-[#dc5244]",
  blue: "bg-[#e9f3fd] text-[#4a8fd8]",
  purple: "bg-[#f8effc] text-[#bd8ade]",
  gray: "bg-[#eeeeee] text-[#333]",
};

function C({ t = "green", children, className = "" }: Kids & { t?: keyof typeof tones }) {
  return <code className={`rounded-[2px] px-[4px] py-[1.500px] font-['Liberation_Mono',monospace] font-bold ${tones[t]} ${className}`}>{children}</code>;
}

function SpecLink() {
  return <span className="text-[#0b1533]">specs <FaExternalLinkAlt className="mx-[2px] inline size-[13px] align-[-1px]" /></span>;
}

function Row({ name, col, className = "", children }: Kids & { name: string; col: string }) {
  return (
    <div className={`flex border-t border-[#ddd] pt-[7px] pl-2 ${className}`}>
      <div className={`shrink-0 ${col}`}><C>{name}</C></div>
      <div>{children}</div>
    </div>
  );
}

const sections: { bar: string; icon: ReactNode; no: string; name: string; caret: boolean }[] = [
  { bar: "border-[#2fd3e8]", icon: <Gauge className="size-[12px]" />, no: "1", name: "Overview", caret: true },
  { bar: "border-[#ff5c1a]", icon: <FaRoad size={13} />, no: "2", name: "Linux", caret: true },
  { bar: "border-[#45c81e]", icon: <Grain />, no: "3", name: "Apache", caret: true },
  { bar: "border-[#f0b400]", icon: <Scroll />, no: "4", name: "MySQL", caret: false },
];

const sources = ["admin", "auth", "console", "dash", "env", "views"];

function TreeItem({ children, active }: Kids & { active?: boolean }) {
  return <div className={`flex h-[26px] items-center ${active ? "ml-px bg-[#eee] pl-[26px]" : "pl-[27px]"}`}><C>{children}</C></div>;
}
function SubItem({ children, className = "" }: Kids) {
  return <div className={`flex items-center pl-[44px] ${className}`}><span className="mr-[10px] size-1 bg-black" /><C>{children}</C></div>;
}

function DocsPage() {
  return (
    <section className="h-[675px] overflow-hidden text-[13.36px] text-[#222]">
      <div className="flex h-[49px] items-center bg-[#22a89c] text-white">
        <b className="-ml-px w-[154px] text-[16.600px]">Demo</b>
        <ListIcon className="size-[15px]" />
        <FaGlobeAmericas className="ml-[28px] size-[14px]" />
        <Tray className="ml-[27px] size-[15px]" />
        <Rook className="ml-[28px] size-[14px] text-[#f4561c]" />
        <span className="ml-[11px] text-[14.4px] text-[#f4561c]">Admin</span>
      </div>
      <div className="flex h-[626px]">
        <aside className="w-[344px] shrink-0 pt-[23px] pl-[14px]">
          <div className="h-[573px] w-[302px] rounded-[3px] border border-[#c4c4c4] text-[11.5px] text-[#0b1533]">
            <div className="-mx-px -mt-px flex h-[42px] items-center rounded-t-[3px] border-b-[5px] border-[#1abc8c] bg-[#beebdc] pl-[24px] text-[15.4px]"><FaThLarge className="mr-[10px] size-[15px]" />Sections</div>
            <div className="mt-[14px] ml-[15px] w-[271px]">
              {sections.map((s) => (
                <div key={s.no} className={`flex h-[35.800px] items-center border-l-[5px] pl-[13px] ${s.bar}`}>
                  <span className="w-[19px]">{s.icon}</span>
                  <span className="flex-1">Section #{s.no}: <b>{s.name}</b></span>
                  {s.caret && <FaCaretDown className="mr-[12px] size-[17px]" />}
                </div>
              ))}
              <div className="h-[357px] border-l-[5px] border-[#c08fe2]">
                <div className="mb-[0.500px] ml-px flex h-[35px] items-center bg-[#eee] pl-[12px] font-bold">
                  <span className="w-[19px]"><FaCampground size={13} /></span>
                  <span className="flex-1">Section #5: Python</span>
                  <FaCaretUp className="mr-[12px] size-[17px]" />
                </div>
                <TreeItem>/</TreeItem>
                <TreeItem>backup/</TreeItem>
                <TreeItem active>cache/</TreeItem>
                <TreeItem>config/</TreeItem>
                <TreeItem>data/</TreeItem>
                <TreeItem>media/</TreeItem>
                <SubItem className="h-[16.500px]">media/js/</SubItem>
                <TreeItem>src/</TreeItem>
                {sources.map((s) => <SubItem key={s} className="h-[16.400px]">{`src/${s}.py`}</SubItem>)}
                <TreeItem>src/management/commands/</TreeItem>
              </div>
            </div>
          </div>
        </aside>
        <main className="w-[856px] border-l-[5px] border-[#c08fe2] pl-[16px] leading-[19.3px] whitespace-nowrap">
          <h3 className="pt-[11px] pl-[13px] text-[16.94px] leading-[23px]"><C>cache/</C></h3>
          <p className="mt-[6px] pl-[12px]">Contains cache results, <C t="pink">cron</C> and <C t="pink">Django</C> log files, as well as status text files.</p>
          <div className="mt-[10px] ml-[91px] border-b border-[#ddd]">
            <Row name="*.log" col="w-[90px]" className="h-[36px]">Log files for <C t="pink">cron</C> and <C t="pink">Django</C>.</Row>
            <Row name="*.pickle" col="w-[90px]" className="h-[74px]">
              Cached analytics results of <C t="gold">AWS</C>, <C t="gold">Google Analytics</C>, <C t="gold">GitHub</C> repository activities, <C t="gold">Slack</C> activities,<br />
              <C t="gold">Dropbox</C> activities, <C t="orange">Group Calendar</C>, <C t="orange">Schedule Spreadsheet</C>, and <C t="orange">Duty Spreadsheet</C>. Files<br />
              are updated every <u className="underline-offset-2">3/15/30</u> minutes by <C t="pink">cron</C> jobs.
            </Row>
            <Row name="*.txt" col="w-[90px]" className="h-[74px]">
              Status text files used for admin pages. <C>cache/stat_sys.txt</C> contains package versions currently<br />
              installed, memory and disk capacity; used by <C t="red">/admin/</C>. <C>cache/stat_backup.txt</C> contains <C>data/</C><br />
              folder sizes, and <C t="purple">demo</C> <C t="gold">Google Drive</C> file list; used by <C t="red">/admin/backup/</C>.
            </Row>
          </div>
          <hr className="mt-[38px] border-[#eee]" />
          <h3 className="pt-[26px] pl-[13px] text-[16.94px] leading-[23px]"><C>config/</C></h3>
          <p className="mt-[6px] pl-[12px]">Contains app settings and account information. <b>Do not include these files in</b> <C t="gray">git</C>! Template files <C>config/*.conf.example</C> are tracked</p>
          <div className="mt-[9px] ml-[91px]">
            <Row name="bot.conf" col="w-[106px]" className="h-[36px]">Settings for <C t="pink">Bot</C> in <C t="blue">JSON</C> format. Individual functions can be toggled in <C t="red">/admin/bot/</C> page panels.</Row>
            <Row name="cron.conf" col="w-[106px]" className="h-[55px]">
              List of <C t="pink">cron</C> jobs in <C t="blue">JSON</C> format. See <C t="pink">django-crontab</C> <SpecLink />. The suffix of each job is for<br />
              logging into corresponding log files in <C>cache/</C>.
            </Row>
            <Row name="env.conf" col="w-[106px]" className="h-[36px]">Server secrets! Contains database and <C t="gold">Apache</C> login. See <C t="pink">django-environ</C> <SpecLink />.</Row>
            <Row name="group.conf" col="w-[106px]" className="h-[35px]">Group access control file for <C t="gold">Apache</C> and <C t="pink">WebAuth</C>. See <C t="pink">mod_authz_groupfile</C> <SpecLink />.</Row>
            <Row name="oauth.conf" col="w-[106px]" className="h-[74px]">
              Access token and account information for third-party APIs in <C t="blue">JSON</C> format. All vendors are under <C t="purple">demo</C><br />
              <C t="gold">Gmail</C> account. It also records <C t="orange">Schedule Spreadsheet</C> ID, <C t="orange">Duty Spreadsheet</C> ID, <C t="orange">Group</C><br />
              <C t="orange" className="-ml-1">Calendar</C> <C t="blue">ICS</C> link, <C t="gold">AWS</C> IDs, and <C t="gold">Google Analytics</C> ID.
            </Row>
            <div className="flex border-t border-[#ddd] pt-[9px] pl-2">
              <span className="h-4 w-[90px] bg-[#e8f8f3]" />
              <span className="ml-[46px] h-4 w-[28px] bg-[#ffeff8]" />
            </div>
          </div>
        </main>
      </div>
    </section>
  );
}

export default function App() {
  return (
    <div className="h-[3375px] w-[1200px] overflow-hidden bg-white font-['Liberation_Sans',Arial,sans-serif] leading-[18.76px]">
      <PublicationForm />
      <ExportPage />
      <UsersPage />
      <LoginPage />
      <DocsPage />
    </div>
  );
}
